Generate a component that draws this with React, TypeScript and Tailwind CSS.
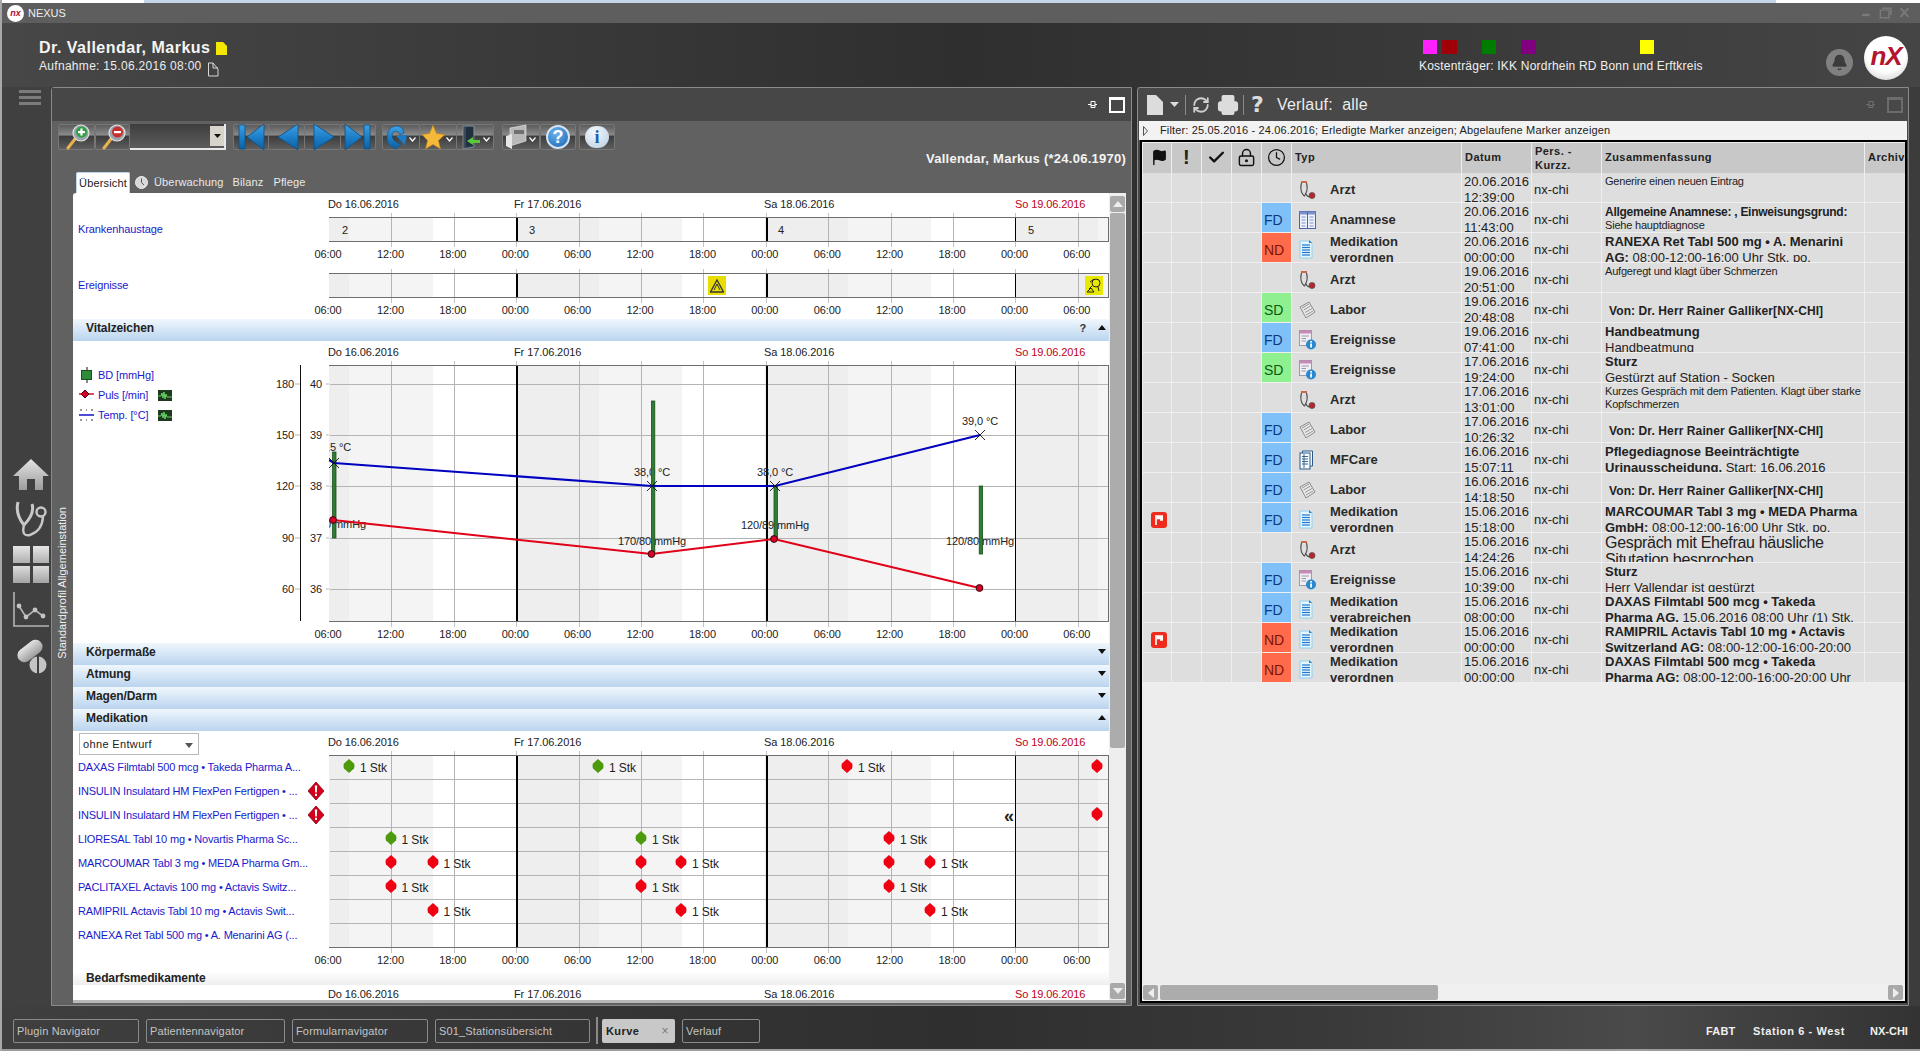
import React from 'react';
import { Bell, Check, Clock, Flag, LockKeyhole, Printer, RefreshCw } from 'lucide-react';

const SHEET_X = 73;
const COL_W = 62.4;
const TIMES = ['06:00', '12:00', '18:00', '00:00', '06:00', '12:00', '18:00', '00:00', '06:00', '12:00', '18:00', '00:00', '06:00'];
const lineX = (i: number) => 329 + i * COL_W;

const BANDS = [
  { from: 329, to: 349, cls: 'bg-[#eeeeee]' },
  { from: 349, to: 433, cls: 'bg-[#f4f4f4]' },
  { from: 516, to: 599, cls: 'bg-[#eeeeee]' },
  { from: 599, to: 682, cls: 'bg-[#f4f4f4]' },
  { from: 765, to: 848, cls: 'bg-[#eeeeee]' },
  { from: 848, to: 931, cls: 'bg-[#f4f4f4]' },
  { from: 1015, to: 1098, cls: 'bg-[#eeeeee]' },
  { from: 1098, to: 1108, cls: 'bg-[#f4f4f4]' },
];

const TimeChart: React.FC<{ top: number; height: number; hLines?: number[] }> = ({ top, height, hLines = [] }) => (
  <div className="absolute left-[256px] w-[780px] border border-[#6e6e6e]" style={{ top, height }}>
    {BANDS.map((b, i) => (
      <div key={i} className={`absolute top-0 bottom-0 ${b.cls}`} style={{ left: b.from - 330, width: b.to - b.from }} />
    ))}
    {hLines.map((y) => (
      <div key={y} className="absolute left-0 right-0 h-px bg-[#b4b4b4]" style={{ top: y - top - 1 }} />
    ))}
    {TIMES.map((t, i) => {
      if (i === 0) return null;
      const mid = t === '00:00';
      return (
        <React.Fragment key={i}>
          <div
            className={`absolute top-0 bottom-0 ${mid ? 'bg-black' : 'bg-[#b4b4b4]'} ${mid && i < 11 ? 'w-[2px]' : 'w-px'}`}
            style={{ left: lineX(i) - 330 }}
          />
          <div className="absolute top-[-5px] h-1 w-px bg-[#c4c4c4]" style={{ left: lineX(i) - 330 }} />
          <div className="absolute bottom-[-6px] h-[5px] w-px bg-[#c4c4c4]" style={{ left: lineX(i) - 330 }} />
        </React.Fragment>
      );
    })}
  </div>
);

const TimeAxis: React.FC<{ y: number }> = ({ y }) => (
  <>
    {TIMES.map((t, i) => (
      <span key={i} className="absolute -translate-x-1/2 -translate-y-1/2 leading-none text-[#222]" style={{ left: lineX(i) - 1 - SHEET_X, top: y }}>
        {t}
      </span>
    ))}
  </>
);

const DateRow: React.FC<{ y: number }> = ({ y }) => (
  <>
    <span className="absolute left-[255px] -translate-y-1/2 leading-none text-[#222]" style={{ top: y }}>Do 16.06.2016</span>
    <span className="absolute left-[441px] -translate-y-1/2 leading-none text-[#222]" style={{ top: y }}>Fr 17.06.2016</span>
    <span className="absolute left-[691px] -translate-y-1/2 leading-none text-[#222]" style={{ top: y }}>Sa 18.06.2016</span>
    <span className="absolute left-[942px] -translate-y-1/2 leading-none text-[#c00020]" style={{ top: y }}>So 19.06.2016</span>
  </>
);

const SectionBar: React.FC<{ label: string; up?: boolean; help?: boolean }> = ({ label, up, help }) => (
  <div className="flex h-[22px] items-center bg-linear-to-b from-[#f0f7fd] to-[#bad4ee] pl-[13px] pr-[3px]">
    <span className="mb-[5px] text-[12px] font-bold text-[#222]">{label}</span>
    <span className="ml-auto flex items-center gap-[12px]">
      {help && <span className="mb-[3px] font-bold text-[#333]">?</span>}
      <svg width="8" height="5" viewBox="0 0 8 5" className="mb-[6px]">
        <path d={up ? 'M0 5 L4 0 L8 5Z' : 'M0 0 L8 0 L4 5Z'} fill="#111" />
      </svg>
    </span>
  </div>
);

/* toolbar */
const ToolBtn: React.FC<{ className: string; children: React.ReactNode }> = ({ className, children }) => (
  <div className={`relative flex h-[26px] items-center justify-center rounded-[2px] border border-[#777] bg-[linear-gradient(#5c5c5c_0%,#8a8a8a_42%,#3c3c3c_46%,#5e5e5e_100%)] ${className}`}>
    {children}
  </div>
);

const Chev = () => (
  <svg width="7" height="5" viewBox="0 0 7 5" className="absolute bottom-[7px] right-[3px]">
    <path d="M0.5 0.5 L3.5 4 L6.5 0.5" fill="none" stroke="#fff" strokeWidth="1.2" />
  </svg>
);

const Magnifier: React.FC<{ fill: string; plus?: boolean }> = ({ fill, plus }) => (
  <svg width="30" height="26" viewBox="0 0 30 26">
    <line x1="6" y1="24" x2="13" y2="15" stroke="#eab24a" strokeWidth="3" strokeLinecap="round" />
    <circle cx="19" cy="9" r="8" fill="#9aa4ac" stroke="#e2e2e2" strokeWidth="1.2" />
    <circle cx="19.5" cy="8" r="5.5" fill={fill} />
    <rect x="16" y="7" width="7" height="2.2" fill="#fff" />
    {plus && <rect x="18.4" y="4.5" width="2.2" height="7" fill="#fff" />}
  </svg>
);

const NAV_PATHS = {
  first: 'M3 1 H9 V25 H3Z M28 0 V26 L11 13Z',
  prev: 'M26 0 V26 L6 13Z',
  next: 'M6 0 V26 L26 13Z',
  last: 'M27 1 H21 V25 H27Z M2 0 V26 L19 13Z',
};

const NavIcon: React.FC<{ kind: keyof typeof NAV_PATHS }> = ({ kind }) => (
  <svg width="30" height="26" viewBox="0 0 30 26">
    <path d={NAV_PATHS[kind]} fill="url(#navBlue)" stroke="#0d4f86" strokeWidth="0.8" />
  </svg>
);

const PinIcon: React.FC<{ color: string }> = ({ color }) => (
  <svg width="9" height="9" viewBox="0 0 9 9">
    <path d="M0 4.5 H3 M3 1.5 H7 V7.5 H3Z M3 5.5 H7 M7 4.5 H9" stroke={color} fill="none" />
  </svg>
);

/* table icons */
const ArztIcon = () => (
  <svg width="17" height="20" viewBox="0 0 17 20">
    <path d="M2.5 3 Q1 9 3 13 Q4.5 16 6 16" fill="none" stroke="#444" strokeWidth="1.1" />
    <path d="M7.5 3 Q9 9 7 13 Q5.5 16 6 16" fill="none" stroke="#444" strokeWidth="1.1" />
    <path d="M7 14 Q9 18 11 16" fill="none" stroke="#444" strokeWidth="1.1" />
    <rect x="2" y="1" width="6" height="2" fill="#c86a4a" />
    <circle cx="13" cy="15.5" r="3" fill="#b8242c" stroke="#555" strokeWidth="0.8" />
  </svg>
);

const BookIcon = () => (
  <svg width="17" height="18" viewBox="0 0 17 18">
    <rect x="0.5" y="0.5" width="16" height="17" fill="#eef2fa" stroke="#4a62a8" />
    <rect x="0.5" y="0.5" width="16" height="3" fill="#7d92cc" />
    <line x1="8.5" y1="1" x2="8.5" y2="17" stroke="#4a62a8" />
    {[6, 9, 12, 15].map((y) => (
      <path key={y} d={`M2.5 ${y} H6.5 M10.5 ${y} H14.5`} stroke="#7d92cc" strokeWidth="1" />
    ))}
  </svg>
);

const MedIcon = () => (
  <svg width="14" height="19" viewBox="0 0 14 19">
    <path d="M1 1 H10 L13 3 V18 H1Z" fill="#e6f6fd" stroke="#8fd0ee" />
    <path d="M10 0 L13 3 H10Z" fill="#1f86c8" />
    {[5, 7.5, 10, 12.5, 15].map((y) => (
      <line key={y} x1="3" y1={y} x2="11" y2={y} stroke="#1f78d0" strokeWidth="1.2" />
    ))}
  </svg>
);

const LaborIcon = () => (
  <svg width="17" height="18" viewBox="0 0 17 18">
    <path d="M1 6 L10 1 L16 11 L7 17Z" fill="#e8e8e8" stroke="#8a8a8a" />
    <path d="M3 7 L10 3 M4.5 9 L11.5 5 M6 11.5 L13 7.5 M7 14 L14 10" stroke="#8a8a8a" strokeWidth="0.9" />
  </svg>
);

const EventIcon = () => (
  <svg width="17" height="20" viewBox="0 0 17 20">
    <rect x="0.5" y="0.5" width="12" height="15" fill="#f2eef6" stroke="#9a9aa8" />
    <rect x="0.5" y="0.5" width="12" height="3" fill="#c888b8" />
    <path d="M2.5 6 H10 M2.5 8.5 H7 M2.5 11 H7" stroke="#9a9aa8" />
    <circle cx="12" cy="14.5" r="5" fill="#2a88cc" />
    <rect x="11.2" y="13.5" width="1.8" height="4" fill="#fff" />
    <rect x="11.2" y="11" width="1.8" height="1.6" fill="#fff" />
  </svg>
);

const CareIcon = () => (
  <svg width="15" height="20" viewBox="0 0 15 20">
    <path d="M3.5 3 V1 H13.5 V16 H11" fill="#f6fafd" stroke="#2b5a8a" />
    <rect x="1" y="3" width="10" height="16" fill="#f6fafd" stroke="#2b5a8a" />
    <path d="M3 6.5 H9 M3 9 H9 M3 11.5 H9 M3 14 H9 M5 4 V18" stroke="#2b5a8a" strokeWidth="0.9" />
  </svg>
);

const TYPE_ICON = {
  Arzt: <ArztIcon />,
  Anamnese: <BookIcon />,
  Med: <MedIcon />,
  Labor: <LaborIcon />,
  Ereignisse: <EventIcon />,
  MFCare: <CareIcon />,
};

const RedFlag = () => (
  <svg width="16" height="16" viewBox="0 0 16 16">
    <rect x="0" y="0" width="16" height="16" rx="3" fill="#ef2b1e" />
    <path d="M5 3 V13" stroke="#fff" strokeWidth="1.6" />
    <path d="M5.5 3.2 H12 V8.8 H9 V7.2 H5.5Z" fill="#fff" />
  </svg>
);

const B = ({ children }: { children: React.ReactNode }) => <span className="text-[13px] font-bold">{children}</span>;
const Sm = ({ children }: { children: React.ReactNode }) => <div className="text-[11px] leading-[13px] tracking-[-0.2px]">{children}</div>;
const Von = () => (
  <div className="pl-1 pt-[9px] text-[12px] font-bold tracking-[0.1px]">Von: Dr. Herr Rainer Galliker[NX-CHI]</div>
);

type Row = {
  tag?: 'FD' | 'ND' | 'SD';
  flag?: boolean;
  icon: keyof typeof TYPE_ICON;
  type: string[];
  date: string;
  time: string;
  sum: React.ReactNode;
};

const ROWS: Row[] = [
  { icon: 'Arzt', type: ['Arzt'], date: '20.06.2016', time: '12:39:00', sum: <div className="pt-[1px]"><Sm>Generire einen neuen Eintrag</Sm></div> },
  {
    tag: 'FD', icon: 'Anamnese', type: ['Anamnese'], date: '20.06.2016', time: '11:43:00',
    sum: (
      <div className="pt-[1px]">
        <div className="text-[12px] font-bold leading-[14px] tracking-[-0.27px]">Allgemeine Anamnese: , Einweisungsgrund:</div>
        <Sm>Siehe hauptdiagnose</Sm>
      </div>
    ),
  },
  {
    tag: 'ND', icon: 'Med', type: ['Medikation', 'verordnen'], date: '20.06.2016', time: '00:00:00',
    sum: <><B>RANEXA Ret Tabl 500 mg • A. Menarini</B><br /><B>AG:</B> 08:00-12:00-16:00 Uhr Stk. po.</>,
  },
  { icon: 'Arzt', type: ['Arzt'], date: '19.06.2016', time: '20:51:00', sum: <div className="pt-[1px]"><Sm>Aufgeregt und klagt über Schmerzen</Sm></div> },
  { tag: 'SD', icon: 'Labor', type: ['Labor'], date: '19.06.2016', time: '20:48:08', sum: <Von /> },
  { tag: 'FD', icon: 'Ereignisse', type: ['Ereignisse'], date: '19.06.2016', time: '07:41:00', sum: <><B>Handbeatmung</B><br />Handbeatmung</> },
  { tag: 'SD', icon: 'Ereignisse', type: ['Ereignisse'], date: '17.06.2016', time: '19:24:00', sum: <><B>Sturz</B><br />Gestürzt auf Station - Socken</> },
  {
    icon: 'Arzt', type: ['Arzt'], date: '17.06.2016', time: '13:01:00',
    sum: <div className="pt-[1px]"><Sm>Kurzes Gespräch mit dem Patienten. Klagt über starke</Sm><Sm>Kopfschmerzen</Sm></div>,
  },
  { tag: 'FD', icon: 'Labor', type: ['Labor'], date: '17.06.2016', time: '10:26:32', sum: <Von /> },
  { tag: 'FD', icon: 'MFCare', type: ['MFCare'], date: '16.06.2016', time: '15:07:11', sum: <><B>Pflegediagnose Beeinträchtigte</B><br /><B>Urinausscheidung.</B> Start: 16.06.2016</> },
  { tag: 'FD', icon: 'Labor', type: ['Labor'], date: '16.06.2016', time: '14:18:50', sum: <Von /> },
  {
    tag: 'FD', flag: true, icon: 'Med', type: ['Medikation', 'verordnen'], date: '15.06.2016', time: '15:18:00',
    sum: <><B>MARCOUMAR Tabl 3 mg • MEDA Pharma</B><br /><B>GmbH:</B> 08:00-12:00-16:00 Uhr Stk. po.</>,
  },
  {
    icon: 'Arzt', type: ['Arzt'], date: '15.06.2016', time: '14:24:26',
    sum: <div className="text-[16px] leading-[17px] tracking-[-0.3px]">Gespräch mit Ehefrau häusliche<br />Situtation besprochen</div>,
  },
  { tag: 'FD', icon: 'Ereignisse', type: ['Ereignisse'], date: '15.06.2016', time: '10:39:00', sum: <><B>Sturz</B><br />Herr Vallendar ist gestürzt</> },
  {
    tag: 'FD', icon: 'Med', type: ['Medikation', 'verabreichen'], date: '15.06.2016', time: '08:00:00',
    sum: <><B>DAXAS Filmtabl 500 mcg • Takeda</B><br /><B>Pharma AG.</B> 15.06.2016 08:00 Uhr (1) Stk.</>,
  },
  {
    tag: 'ND', flag: true, icon: 'Med', type: ['Medikation', 'verordnen'], date: '15.06.2016', time: '00:00:00',
    sum: <><B>RAMIPRIL Actavis Tabl 10 mg • Actavis</B><br /><B>Switzerland AG:</B> 08:00-12:00-16:00-20:00</>,
  },
  {
    tag: 'ND', icon: 'Med', type: ['Medikation', 'verordnen'], date: '15.06.2016', time: '00:00:00',
    sum: <><B>DAXAS Filmtabl 500 mcg • Takeda</B><br /><B>Pharma AG:</B> 08:00-12:00-16:00-20:00 Uhr</>,
  },
];

const GRID = 'grid grid-cols-[29px_30px_30px_30px_30px_170px_70px_70px_263px_1fr]';
const CELL = 'border-r border-[#efefef]';

const TAG_CLS = {
  FD: 'bg-[#7fc0f8] text-[#0b3a80]',
  ND: 'bg-[#ff6a4a] text-[#7a1408]',
  SD: 'bg-[#8ff08f] text-[#0c5a12]',
};

const HistoryRow: React.FC<{ r: Row }> = ({ r }) => (
  <div className={`${GRID} h-[30px] overflow-hidden border-b border-[#efefef] bg-[#dedede] text-[13px] leading-[16px] text-[#222]`}>
    <div className={`${CELL} flex items-center justify-center pl-1`}>{r.flag && <RedFlag />}</div>
    <div className={CELL} />
    <div className={CELL} />
    <div className={CELL} />
    <div className={`${CELL} flex items-center pl-[2px] text-[14px] ${r.tag ? TAG_CLS[r.tag] : ''}`}>{r.tag}</div>
    <div className={`${CELL} flex items-center pl-[7px]`}>
      <span className="flex w-[31px] justify-start">{TYPE_ICON[r.icon]}</span>
      <span className="font-bold text-[#2a2a2a]">
        {r.type.map((t) => (
          <div key={t}>{t}</div>
        ))}
      </span>
    </div>
    <div className={`${CELL} pl-[2px] pt-px`}>
      {r.date}
      <br />
      {r.time}
    </div>
    <div className={`${CELL} flex items-center pl-[2px]`}>nx-chi</div>
    <div className={`${CELL} overflow-hidden whitespace-nowrap pl-[3px] pt-px`}>{r.sum}</div>
    <div />
  </div>
);

/* medication chart */
const MEDS = [
  'DAXAS Filmtabl 500 mcg • Takeda Pharma A...',
  'INSULIN Insulatard HM FlexPen Fertigpen • ...',
  'INSULIN Insulatard HM FlexPen Fertigpen • ...',
  'LIORESAL Tabl 10 mg • Novartis Pharma Sc...',
  'MARCOUMAR Tabl 3 mg • MEDA Pharma Gm...',
  'PACLITAXEL Actavis 100 mg • Actavis Switz...',
  'RAMIPRIL Actavis Tabl 10 mg • Actavis Swit...',
  'RANEXA Ret Tabl 500 mg • A. Menarini AG (...',
];

const DOSES: { row: number; x: number; green?: boolean; text?: boolean }[] = [
  { row: 0, x: 349, green: true, text: true },
  { row: 0, x: 598, green: true, text: true },
  { row: 0, x: 847, text: true },
  { row: 0, x: 1097 },
  { row: 2, x: 1097 },
  { row: 3, x: 390.5, green: true, text: true },
  { row: 3, x: 641, green: true, text: true },
  { row: 3, x: 889, text: true },
  { row: 4, x: 390.5 },
  { row: 4, x: 432.5, text: true },
  { row: 4, x: 641 },
  { row: 4, x: 681, text: true },
  { row: 4, x: 889 },
  { row: 4, x: 930, text: true },
  { row: 5, x: 390.5, text: true },
  { row: 5, x: 641, text: true },
  { row: 5, x: 889, text: true },
  { row: 6, x: 432.5, text: true },
  { row: 6, x: 681, text: true },
  { row: 6, x: 930, text: true },
];

const Dose: React.FC<{ row: number; x: number; green?: boolean; text?: boolean }> = ({ row, x, green, text }) => (
  <>
    <svg width="12" height="14" viewBox="0 0 12 14" className="absolute" style={{ left: x - 6 - SHEET_X, top: 28 + row * 24 }}>
      <path d="M6 0 L11 4.5 Q12 7 11 9.5 L6 14 L1 9.5 Q0 7 1 4.5Z" fill={green ? '#4d9a0c' : '#f00010'} />
    </svg>
    {text && (
      <span className="absolute text-[12px] leading-none text-[#222]" style={{ left: x + 11 - SHEET_X, top: 31 + row * 24 }}>
        1 Stk
      </span>
    )}
  </>
);

const AlertDiamond: React.FC<{ top: number }> = ({ top }) => (
  <svg width="16" height="18" viewBox="0 0 16 18" className="absolute left-[235px]" style={{ top }}>
    <path d="M8 0 L16 9 L8 18 L0 9Z" fill="#d4001a" stroke="#7a0010" strokeWidth="0.8" />
    <path d="M6.8 3.5 H9.2 L8.8 10.5 H7.2Z M7 11.8 H9 V14 H7Z" fill="#fff" />
  </svg>
);

/* vitals */
const VitalsPlot = () => (
  <svg className="absolute left-[187px] top-[19px] h-[270px] w-[860px]" viewBox="260 360 860 270">
    <defs>
      <clipPath id="plotClip">
        <rect x="329" y="365" width="780" height="256" />
      </clipPath>
    </defs>
    <g clipPath="url(#plotClip)">
      <g fontSize="11" fill="#222" textAnchor="middle">
        <text x="333" y="451">38,5 °C</text>
        <text x="332" y="528">140/90 mmHg</text>
        <text x="652" y="476">38,0 °C</text>
        <text x="652" y="545">170/80 mmHg</text>
        <text x="775" y="476">38,0 °C</text>
        <text x="775" y="529">120/89 mmHg</text>
        <text x="980" y="425">39,0 °C</text>
        <text x="980" y="545">120/80 mmHg</text>
      </g>
      <g fill="#2e7d32" stroke="#1c4f20" strokeWidth="0.8">
        <rect x="332.6" y="452" width="3.4" height="86" />
        <rect x="651.4" y="401" width="3.4" height="152" />
        <rect x="774" y="486" width="3.4" height="54" />
        <rect x="979.2" y="486" width="3.4" height="68" />
      </g>
      <polyline points="329,460 334,463 652,486 775,486 980,435" fill="none" stroke="#0000c0" strokeWidth="2.2" />
      <polyline points="333,520 651.5,554 774,539 979.5,588" fill="none" stroke="#e00018" strokeWidth="2" />
      <g stroke="#111" strokeWidth="0.9">
        {[[334, 463], [652, 486], [775, 486], [980, 435]].map(([x, y]) => (
          <path key={x} d={`M${x - 5} ${y - 5} L${x + 5} ${y + 5} M${x - 5} ${y + 5} L${x + 5} ${y - 5}`} />
        ))}
      </g>
      <g fill="#d80028" stroke="#3a0a0a" strokeWidth="1">
        {[[333, 520], [651.5, 554], [774, 539], [979.5, 588]].map(([x, y]) => (
          <circle key={x} cx={x} cy={y} r="3.4" />
        ))}
      </g>
    </g>
    <line x1="300.5" y1="365" x2="300.5" y2="621" stroke="#111" />
    <g stroke="#b4b4b4">
      {[384, 435, 486, 538, 589].map((y) => (
        <path key={y} d={`M295 ${y} H300 M326 ${y} H329`} />
      ))}
    </g>
    <g fontSize="11" fill="#222" textAnchor="end">
      {[[384, '180', '40'], [435, '150', '39'], [486, '120', '38'], [538, '90', '37'], [589, '60', '36']].map(([y, a, b]) => (
        <React.Fragment key={a as string}>
          <text x="294" y={(y as number) + 4}>{a}</text>
          <text x="322" y={(y as number) + 4}>{b}</text>
        </React.Fragment>
      ))}
    </g>
  </svg>
);

const Monitor: React.FC<{ top: number }> = ({ top }) => (
  <svg width="14" height="11" viewBox="0 0 14 11" className="absolute left-[85px]" style={{ top }}>
    <rect width="14" height="11" fill="#1e3a1e" />
    <path d="M0 6 H3 L4 3 L5 8 L6 2 L7 9 L8 4 L9 7 H14" stroke="#6fe06f" strokeWidth="0.9" fill="none" />
  </svg>
);

const BottomTab: React.FC<{ className: string; label: string }> = ({ className, label }) => (
  <div className={`flex h-[24px] items-center rounded-[2px] border border-[#8a8a8a] pl-[3px] text-[11px] tracking-[0.15px] text-[#c4c4c4] ${className}`}>
    {label}
  </div>
);

const Sidebar = () => (
  <div className="flex w-[49px] shrink-0 flex-col bg-[#404040] pl-[11px] pt-[3px]">
    <div className="ml-[6px] flex w-[22px] flex-col gap-[3px]">
      <div className="h-[3px] bg-[#7c7c7c]" />
      <div className="h-[3px] bg-[#7c7c7c]" />
      <div className="h-[3px] bg-[#7c7c7c]" />
    </div>
    <svg width="36" height="32" viewBox="0 0 36 32" className="mt-[354px] shrink-0">
      <path d="M18 0 L36 17 H30 V31 H22 V20 H14 V31 H6 V17 H0Z" fill="url(#navGrey)" />
    </svg>
    <svg width="34" height="38" viewBox="0 0 34 38" className="ml-[2px] mt-[10px] shrink-0" fill="none" stroke="#c8c8c8" strokeWidth="3">
      <path d="M3 1 Q0 13 9 24" />
      <path d="M17 3 Q20 13 9 24" />
      <path d="M9 24 Q6 36 15 34 Q27 30 28 16" strokeWidth="2.4" />
      <circle cx="26" cy="11" r="4.5" strokeWidth="2.4" />
    </svg>
    <div className="mt-[7px] grid h-[37px] w-[36px] shrink-0 grid-cols-2 gap-[3px]">
      <div className="bg-linear-to-b from-[#e6e6e6] to-[#b0b0b0]" />
      <div className="bg-linear-to-b from-[#e6e6e6] to-[#b0b0b0]" />
      <div className="bg-linear-to-b from-[#dcdcdc] to-[#a4a4a4]" />
      <div className="bg-linear-to-b from-[#dcdcdc] to-[#a4a4a4]" />
    </div>
    <svg width="36" height="36" viewBox="0 0 36 36" className="mt-[9px] shrink-0">
      <path d="M1 0 V34 H36" fill="none" stroke="#b4b4b4" strokeWidth="1.6" />
      <polyline points="6,14 13,25 22,18 30,24" fill="none" stroke="#b4b4b4" strokeWidth="1.6" />
      {[[6, 14], [13, 25], [22, 18], [30, 24]].map(([x, y]) => (
        <circle key={x} cx={x} cy={y} r="2.4" fill="#c4c4c4" />
      ))}
    </svg>
    <svg width="34" height="38" viewBox="0 0 34 38" className="ml-[2px] mt-[8px] shrink-0">
      <rect x="1" y="8" width="28" height="14" rx="7" transform="rotate(-38 15 15)" fill="url(#navGrey)" />
      <circle cx="23" cy="29" r="8.5" fill="#c4c4c4" />
      <rect x="22" y="20" width="2" height="18" fill="#404040" />
    </svg>
  </div>
);

const Toolbar = () => (
  <div className="flex h-[29px] shrink-0 pl-[6px] pt-[3px]">
    <ToolBtn className="w-[37px]"><Magnifier fill="#2fa040" plus /></ToolBtn>
    <ToolBtn className="w-[35px]"><Magnifier fill="#c83030" /></ToolBtn>
    <div className="relative h-[26px] w-[96px] border-b-2 border-r-2 border-[#e8e8e8] bg-[linear-gradient(#3e3e3e,#5c5c5c)]">
      <div className="absolute right-0 top-[2px] flex h-[20px] w-[14px] items-center justify-center bg-[#d8d4cc]">
        <svg width="7" height="4" viewBox="0 0 7 4"><path d="M0 0 H7 L3.5 4Z" fill="#111" /></svg>
      </div>
    </div>
    <ToolBtn className="ml-[7px] w-[36px]"><NavIcon kind="first" /></ToolBtn>
    <ToolBtn className="-ml-px w-[37px]"><NavIcon kind="prev" /></ToolBtn>
    <ToolBtn className="-ml-px w-[37px]"><NavIcon kind="next" /></ToolBtn>
    <ToolBtn className="-ml-px w-[36px]"><NavIcon kind="last" /></ToolBtn>
    <ToolBtn className="ml-[6px] w-[38px]">
      <svg width="30" height="26" viewBox="0 0 30 26" className="mr-[6px]">
        <path d="M4 14 Q4 3 13 2 Q20 2 21 9 L17 11 Q16 7 12 7 Q9 8 9 12 Q10 18 18 20 L13 25 Q4 22 4 14Z" fill="url(#navBlue)" stroke="#0d4f86" strokeWidth="0.6" />
        <path d="M13 12 L24 11 L22 21Z" fill="#1a7cc6" />
      </svg>
      <Chev />
    </ToolBtn>
    <ToolBtn className="-ml-px w-[38px]">
      <svg width="24" height="25" viewBox="0 0 24 25" className="mr-[8px]">
        <path d="M11 0 L14.5 8.5 L23 9.5 L16.5 15.5 L18.5 24 L11 19.5 L3.5 24 L5.5 15.5 L0 9.5 L7.5 8.5Z" fill="#f4b83a" stroke="#b77f14" strokeWidth="0.6" />
      </svg>
      <Chev />
    </ToolBtn>
    <ToolBtn className="-ml-px w-[38px]">
      <svg width="24" height="26" viewBox="0 0 24 26" className="mr-[8px]">
        <path d="M4 2 H15 V23 L4 25Z" fill="#3a4a5a" stroke="#9ab" strokeWidth="0.6" />
        <path d="M7 3 L14 3 V22 L7 23Z" fill="#20303e" />
        <path d="M21 16 H14 V13 L8 17 L14 21 V19 H21Z" fill="#5ac83a" />
      </svg>
      <Chev />
    </ToolBtn>
    <ToolBtn className="ml-[8px] w-[38px]">
      <svg width="26" height="26" viewBox="0 0 26 26" className="mr-[8px]">
        <path d="M6 4 L22 1 V17 L6 22Z" fill="#b8b8b8" stroke="#eee" strokeWidth="0.6" />
        <path d="M10 6 H20 V10 H10Z" fill="#707070" />
        <path d="M2 12 L8 10 V25 L2 22Z" fill="#e6e6e6" />
      </svg>
      <Chev />
    </ToolBtn>
    <ToolBtn className="w-[36px]">
      <div className="flex h-[24px] w-[24px] items-center justify-center rounded-full border-2 border-[#d4e4f4] bg-[radial-gradient(circle_at_40%_30%,#6fb4ec,#1462b4)] text-[18px] font-bold leading-none text-white">?</div>
    </ToolBtn>
    <ToolBtn className="ml-[3px] w-[36px]">
      <div className="flex h-[22px] w-[24px] items-center justify-center rounded-full bg-[radial-gradient(circle_at_40%_30%,#f4f8fc,#b8cce0)] font-[family-name:Liberation_Serif,serif] text-[18px] font-bold leading-none text-[#1462b4]">i</div>
    </ToolBtn>
  </div>
);

const Sheet = () => (
  <div className="flex w-[1036px] flex-col rounded-tl-[3px] bg-white text-[11px] tracking-[-0.1px]">
    <div className="relative h-[126px]">
      <DateRow y={11} />
      <span className="absolute left-[5px] top-[29px] leading-[14px] text-[#1a1acc]">Krankenhaustage</span>
      <TimeChart top={24} height={25} />
      {[['2', 342], ['3', 529], ['4', 778], ['5', 1028]].map(([n, x]) => (
        <span key={n} className="absolute top-[31px] leading-[13px] text-[#222]" style={{ left: (x as number) - SHEET_X }}>{n}</span>
      ))}
      <TimeAxis y={61} />
      <span className="absolute left-[5px] top-[85px] leading-[14px] text-[#1a1acc]">Ereignisse</span>
      <TimeChart top={80} height={25} />
      <div className="absolute left-[635px] top-[83px] flex h-[19px] w-[18px] items-center justify-center bg-[#e8dc00]">
        <svg width="14" height="14" viewBox="0 0 14 14">
          <path d="M7 1 L13.5 13 H0.5Z" fill="none" stroke="#333" strokeWidth="1.3" />
          <path d="M4 11 L7 5 L10 11" fill="none" stroke="#333" />
        </svg>
      </div>
      <div className="absolute left-[1012px] top-[83px] flex h-[19px] w-[18px] items-center justify-center bg-[#e8e800]">
        <svg width="16" height="15" viewBox="0 0 16 15" fill="none" stroke="#222" strokeWidth="1">
          <circle cx="10" cy="5" r="4" />
          <path d="M4 4 L8 1 M6 8 L3 11 M1 14 H8 L5 10Z M12 9 L13 13" />
        </svg>
      </div>
      <TimeAxis y={117} />
    </div>

    <SectionBar label="Vitalzeichen" up help />

    <div className="relative h-[302px]">
      <DateRow y={11} />
      <svg width="14" height="16" viewBox="0 0 14 16" className="absolute left-[7px] top-[26px]">
        <line x1="7" y1="0" x2="7" y2="16" stroke="#111" />
        <rect x="1.5" y="3.5" width="10" height="9" fill="#2e8b3a" stroke="#1c4f20" />
      </svg>
      <span className="absolute left-[25px] top-[27px] leading-[14px] text-[#1a1acc]">BD [mmHg]</span>
      <svg width="15" height="10" viewBox="0 0 15 10" className="absolute left-[6px] top-[48px]">
        <line x1="0" y1="5" x2="15" y2="5" stroke="#d00018" strokeWidth="1.4" />
        <path d="M6 1 L10 5 L6 9 L2 5Z" fill="#d80028" stroke="#3a0a0a" />
      </svg>
      <span className="absolute left-[25px] top-[47px] leading-[14px] text-[#1a1acc]">Puls [/min]</span>
      <Monitor top={49} />
      <svg width="15" height="12" viewBox="0 0 15 12" className="absolute left-[6px] top-[68px]">
        <line x1="0" y1="6" x2="15" y2="6" stroke="#0000c0" strokeWidth="1.4" />
        <path d="M1 1 h2 M12 1 h2 M1 11 h2 M12 11 h2 M7 1 h1 M7 11 h1" stroke="#333" />
      </svg>
      <span className="absolute left-[25px] top-[67px] leading-[14px] text-[#1a1acc]">Temp. [°C]</span>
      <Monitor top={69} />
      <TimeChart top={24} height={257} hLines={[43, 94, 145, 197, 248]} />
      <VitalsPlot />
      <TimeAxis y={293} />
    </div>

    <SectionBar label="Körpermaße" />
    <SectionBar label="Atmung" />
    <SectionBar label="Magen/Darm" />
    <SectionBar label="Medikation" up />

    <div className="relative h-[240px]">
      <div className="absolute left-[6px] top-[2px] flex h-[22px] w-[120px] items-center border border-[#b8b8b8] bg-white pl-[3px] tracking-[0.35px] text-[#222]">
        ohne Entwurf
        <svg width="8" height="5" viewBox="0 0 8 5" className="absolute right-[5px] top-[9px]"><path d="M0 0 H8 L4 5Z" fill="#555" /></svg>
      </div>
      <DateRow y={11} />
      <TimeChart top={24} height={193} hLines={[48, 72, 96, 120, 144, 168, 192]} />
      {MEDS.map((m, i) => (
        <span key={i} className="absolute left-[5px] whitespace-nowrap leading-[14px] tracking-[-0.17px] text-[#1a1acc]" style={{ top: 29 + i * 24 }}>{m}</span>
      ))}
      <AlertDiamond top={51} />
      <AlertDiamond top={75} />
      {DOSES.map((d, i) => (
        <Dose key={i} {...d} />
      ))}
      <span className="absolute left-[931px] top-[75px] text-[18px] font-bold leading-[20px] text-[#222]">«</span>
      <TimeAxis y={229} />
    </div>

    <div className="flex h-[14px] items-center bg-linear-to-b from-white to-[#eeeeee] pl-[13px] text-[12px] font-bold text-[#222]">Bedarfsmedikamente</div>
    <div className="relative h-[15px]">
      <DateRow y={9} />
    </div>
  </div>
);

const VScroll = () => (
  <div className="flex w-[17px] flex-col bg-[#eeeeee] px-px pb-px pt-[3px]">
    <div className="flex h-[16px] items-center justify-center rounded-[2px] bg-[#a9a9a9]">
      <svg width="10" height="6" viewBox="0 0 10 6"><path d="M0 6 L5 0 L10 6Z" fill="#eee" /></svg>
    </div>
    <div className="mt-px h-[535px] rounded-[2px] bg-[#acacac]" />
    <div className="mt-auto flex h-[16px] items-center justify-center rounded-[2px] bg-[#a9a9a9]">
      <svg width="10" height="6" viewBox="0 0 10 6"><path d="M0 0 L5 6 L10 0Z" fill="#eee" /></svg>
    </div>
  </div>
);

const LeftPanel = () => (
  <div className="flex w-[1081px] shrink-0 flex-col rounded-tl-[3px] border border-[#8a8a8a]">
    <div className="flex h-[33px] shrink-0 items-center justify-end bg-[#474747] pr-[6px]">
      <PinIcon color="#ffffff" />
      <div className="ml-[12px] h-[16px] w-[16px] border-2 border-t-[3px] border-white" />
    </div>
    <div className="flex flex-1 flex-col bg-[#616161]">
      <Toolbar />
      <div className="flex h-[22px] shrink-0 justify-end pr-[5px] pt-px text-[13px] font-bold leading-[16px] tracking-[0.25px] text-[#f4f4f4]">Vallendar, Markus (*24.06.1970)</div>
      <div className="flex h-[21px] shrink-0 items-center pl-[24px] text-[11px] tracking-[0.15px] text-[#eaeaea]">
        <div className="flex h-[22px] w-[54px] items-center justify-center self-start rounded-t-[2px] border-x border-t border-[#bcd4ec] bg-white text-[#222]">Übersicht</div>
        <svg width="13" height="13" viewBox="0 0 13 13" className="ml-[5px]">
          <circle cx="6.5" cy="6.5" r="6" fill="#d8d8d8" stroke="#f0f0f0" />
          <path d="M6.5 2.5 V6.5 L9 9" fill="none" stroke="#555" />
        </svg>
        <span className="ml-[6px]">Überwachung</span>
        <span className="ml-[9px]">Bilanz</span>
        <span className="ml-[10px]">Pflege</span>
      </div>
      <div className="flex h-[807px] shrink-0">
        <div className="relative w-[21px]">
          <span className="absolute bottom-[341px] left-[4px] rotate-180 whitespace-nowrap text-[11px] leading-[13px] text-[#f0f0f0] [writing-mode:vertical-rl]">Standardprofil Allgemeinstation</span>
        </div>
        <Sheet />
        <VScroll />
      </div>
      <div className="ml-[21px] h-[3px] w-[1053px] bg-[#b8b8b8]" />
    </div>
  </div>
);

const HEAD = `${CELL} flex items-center pb-[2px]`;

const RightPanel = () => (
  <div className="flex w-[772px] shrink-0 flex-col rounded-tl-[3px] border border-[#8a8a8a] bg-[#484848]">
    <div className="flex h-[33px] shrink-0 items-center pl-[8px] pr-[5px]">
      <svg width="34" height="22" viewBox="0 0 34 22">
        <path d="M1 1 H10 L17 8 V21 H1Z" fill="#dcdcdc" />
        <path d="M24 8 H33 L28.5 13Z" fill="#dcdcdc" />
      </svg>
      <div className="ml-[5px] h-[20px] w-px bg-[#8a8a8a]" />
      <RefreshCw size={18} strokeWidth={2.4} className="ml-[6px] text-[#cfcfcf]" />
      <Printer size={22} fill="#dcdcdc" strokeWidth={2} className="ml-[7px] text-[#dcdcdc]" />
      <div className="ml-[4px] h-[20px] w-px bg-[#8a8a8a]" />
      <span className="ml-[7px] w-[26px] font-[family-name:DejaVu_Sans,sans-serif] text-[22px] font-bold leading-[28px] text-[#dcdcdc]">?</span>
      <span className="whitespace-pre text-[16px] leading-[20px] tracking-[0.2px] text-[#ececec]">Verlauf:  alle</span>
      <span className="ml-auto"><PinIcon color="#707070" /></span>
      <div className="ml-[12px] h-[16px] w-[16px] border-2 border-t-[3px] border-[#6c6c6c]" />
    </div>
    <div className="ml-px flex h-[19px] w-[768px] shrink-0 items-center bg-[#f2f2f2] pl-[4px] text-[11px] tracking-[0.15px] text-[#222]">
      <svg width="5" height="10" viewBox="0 0 5 10" className="mr-[12px]"><path d="M0.5 0.5 L4.5 5 L0.5 9.5Z" fill="none" stroke="#555" /></svg>
      Filter: 25.05.2016 - 24.06.2016; Erledigte Marker anzeigen; Abgelaufene Marker anzeigen
    </div>
    <div className="relative ml-[2px] h-[863px] w-[767px] shrink-0 border-2 border-black bg-[#ededed] pl-px pt-px">
      <div className={`${GRID} h-[30px] bg-[#c8c8c8] text-[11px] font-bold leading-[14px] tracking-[0.45px] text-[#222]`}>
        <div className={`${HEAD} justify-center pl-1`}><Flag size={17} fill="#111" stroke="#111" /></div>
        <div className={`${HEAD} justify-center text-[20px] leading-none`}>!</div>
        <div className={`${HEAD} justify-center`}><Check size={19} strokeWidth={3} color="#111" /></div>
        <div className={`${HEAD} justify-center`}><LockKeyhole size={19} strokeWidth={1.8} color="#111" /></div>
        <div className={`${HEAD} justify-center`}><Clock size={19} strokeWidth={1.6} color="#111" /></div>
        <div className={`${HEAD} pl-[3px]`}>Typ</div>
        <div className={`${HEAD} pl-[3px]`}>Datum</div>
        <div className={`${CELL} pl-[3px] pt-px`}>Pers. -<br />Kurzz.</div>
        <div className={`${HEAD} pl-[3px]`}>Zusammenfassung</div>
        <div className="flex items-center overflow-hidden pb-[2px] pl-[3px]">Archiv</div>
      </div>
      {ROWS.map((r, i) => (
        <HistoryRow key={i} r={r} />
      ))}
      <div className="absolute bottom-0 left-0 flex h-[17px] w-[763px] items-center bg-[#f0f0f0] px-px">
        <div className="flex h-[15px] w-[15px] items-center justify-center rounded-[2px] bg-[#a9a9a9]">
          <svg width="6" height="10" viewBox="0 0 6 10"><path d="M6 0 L0 5 L6 10Z" fill="#eee" /></svg>
        </div>
        <div className="ml-[2px] h-[15px] w-[278px] rounded-[2px] bg-[#acacac]" />
        <div className="ml-auto mr-px flex h-[15px] w-[15px] items-center justify-center rounded-[2px] bg-[#a9a9a9]">
          <svg width="6" height="10" viewBox="0 0 6 10"><path d="M0 0 L6 5 L0 10Z" fill="#eee" /></svg>
        </div>
      </div>
    </div>
  </div>
);

export default function App() {
  return (
    <div className="relative flex h-[1051px] w-[1920px] flex-col overflow-hidden border-l-2 border-[#a8a8a8] bg-[#3c3c3c] font-[family-name:Liberation_Sans,Arial,sans-serif]">
      <svg className="absolute h-0 w-0">
        <defs>
          <linearGradient id="navBlue" x1="0" y1="0" x2="0" y2="1">
            <stop offset="0" stopColor="#3fa2e4" />
            <stop offset="0.55" stopColor="#1a7cc6" />
            <stop offset="1" stopColor="#0f5f9e" />
          </linearGradient>
          <linearGradient id="navGrey" x1="0" y1="0" x2="0" y2="1">
            <stop offset="0" stopColor="#e4e4e4" />
            <stop offset="1" stopColor="#9c9c9c" />
          </linearGradient>
        </defs>
      </svg>

      {/* desktop strip above the window */}
      <div className="flex h-[3px] shrink-0 bg-[#c5d5ea]">
        <div className="w-[142px] bg-white" />
        <div className="ml-auto w-[144px] bg-white" />
      </div>

      {/* title bar */}
      <div className="flex h-[20px] shrink-0 items-center bg-[#5e5e5e] pl-[5px] pr-[2px]">
        <div className="flex h-[17px] w-[17px] items-center justify-center rounded-full bg-white text-[9px] font-bold italic leading-none text-[#b01030]">nx</div>
        <span className="ml-[4px] text-[11px] leading-[14px] text-[#eeeeee]">NEXUS</span>
        <svg width="58" height="16" viewBox="0 0 60 16" className="ml-auto">
          <path d="M2 10 H10" stroke="#7a7a7a" strokeWidth="2.5" />
          <path d="M23 3 H32 V10 M21 5 H30 V13 H21Z" fill="none" stroke="#7a7a7a" strokeWidth="1.5" />
          <path d="M42 3 L50 12 M50 3 L42 12" stroke="#7a7a7a" strokeWidth="2" />
        </svg>
      </div>

      {/* patient header */}
      <div className="relative h-[64px] shrink-0 bg-linear-to-r from-[#474747] via-[#2f2f2f] to-[#454545] pl-[37px] pt-[16px]">
        <div className="flex h-[18px] items-center">
          <span className="text-[16px] font-bold leading-[18px] tracking-[0.5px] text-[#f4f4f4]">Dr. Vallendar, Markus</span>
          <svg width="11" height="13" viewBox="0 0 11 13" className="ml-[6px]">
            <path d="M0 0 H7 L11 4 V13 H0Z" fill="#f5e800" />
          </svg>
        </div>
        <div className="mt-[2px] flex h-[14px] items-start">
          <span className="text-[12px] leading-[14px] tracking-[0.3px] text-[#ececec]">Aufnahme: 15.06.2016 08:00</span>
          <svg width="11" height="15" viewBox="0 0 11 15" className="ml-[6px] mt-[3px]">
            <path d="M0.5 1 V14 H10 M0.5 1 H5 L10 7 V14 M5 1 V6 H10" fill="none" stroke="#d8d8d8" />
          </svg>
        </div>

        <div className="absolute left-[1417px] top-[17px]">
          <div className="flex pl-[4px]">
            <div className="h-[14px] w-[14px] bg-[#ff20ff]" />
            <div className="ml-[5px] h-[14px] w-[15px] bg-[#a00008]" />
            <div className="ml-[25px] h-[14px] w-[14px] bg-[#007c00]" />
            <div className="ml-[25px] h-[14px] w-[15px] bg-[#800080]" />
            <div className="ml-[104px] h-[14px] w-[14px] bg-[#ffff00]" />
          </div>
          <div className="mt-[5px] whitespace-nowrap text-[12px] leading-[14px] tracking-[0.21px] text-[#f0f0f0]">Kostenträger: IKK Nordrhein RD Bonn und Erftkreis</div>
        </div>

        <div className="absolute left-[1824px] top-[26px] flex h-[27px] w-[27px] items-center justify-center rounded-full bg-[#808080]">
          <Bell size={17} fill="#3c3c3c" stroke="#3c3c3c" />
        </div>
        <div className="absolute left-[1862px] top-[13px] flex h-[44px] w-[44px] items-center justify-center rounded-full bg-[radial-gradient(circle_at_50%_35%,#ffffff_55%,#c4c4c4)] pb-1 text-[26px] font-bold italic leading-none tracking-[-1px] text-[#b3142e]">
          nX
        </div>
      </div>

      {/* work area */}
      <div className="flex h-[919px] shrink-0">
        <Sidebar />
        <LeftPanel />
        <div className="w-[5px] shrink-0 bg-[#303030]" />
        <RightPanel />
      </div>

      {/* bottom bar */}
      <div className="flex h-[43px] shrink-0 bg-[linear-gradient(to_right,#3f3f3f,#2f2f2f_50%,#3a3a3a_70%,#4a4a4a_85%,#333333)] pl-[11px] pt-[13px]">
        <BottomTab className="w-[126px]" label="Plugin Navigator" />
        <BottomTab className="ml-[7px] w-[139px]" label="Patientennavigator" />
        <BottomTab className="ml-[7px] w-[136px]" label="Formularnavigator" />
        <BottomTab className="ml-[7px] w-[155px]" label="S01_Stationsübersicht" />
        <div className="-mt-[2px] ml-[6px] h-[27px] w-[2px] bg-[#8a8a8a]" />
        <div className="relative ml-[4px] flex h-[24px] w-[73px] items-center rounded-[2px] bg-[#c8c8c8] pl-[4px] text-[11px] font-bold tracking-[0.4px] text-[#222]">
          Kurve
          <span className="absolute right-[6px] text-[12px] font-normal text-[#7a7a7a]">×</span>
        </div>
        <BottomTab className="ml-[7px] w-[78px]" label="Verlauf" />
        <div className="ml-[946px] flex h-[24px] items-center text-[11px] font-bold leading-[13px] text-[#f0f0f0]">
          <span className="w-[47px] tracking-[0.2px]">FABT</span>
          <span className="w-[117px] tracking-[0.6px]">Station 6 - West</span>
          <span>NX-CHI</span>
        </div>
      </div>
      <div className="h-[2px] shrink-0 bg-[#9c9c9c]" />
    </div>
  );
}
